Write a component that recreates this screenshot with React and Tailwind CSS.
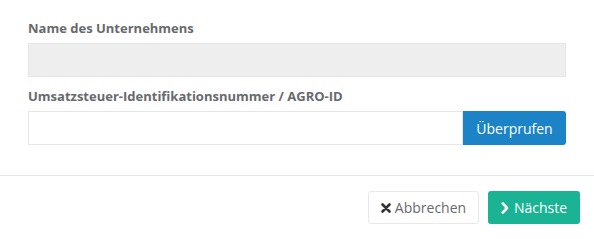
export default function App() {
  return (
    <div className="w-[594px] h-[239px] bg-white font-['Open_Sans',sans-serif] text-[#676a6c]">
      <div className="pt-[19px] pb-[30px] px-[28px]">
        <div className="mb-[10px]">
          <label className="block text-[13px] font-bold leading-[19px] mb-[5px]">Name des Unternehmens</label>
          <div className="h-[34px] bg-[#eeeeee] border border-[#e5e6e7]" />
        </div>
        <div>
          <label className="block text-[13px] font-bold leading-[19px] mb-[5px]">
            Umsatzsteuer-Identifikationsnummer / AGRO-ID
          </label>
          <div className="flex h-[34px]">
            <input className="flex-1 min-w-0 border border-[#e5e6e7] bg-white outline-none px-3 text-[14px]" />
            <button className="w-[103px] bg-[#1c84c6] text-white text-[14px] rounded-r-[3px]">Überprufen</button>
          </div>
        </div>
      </div>
      <div className="border-t border-[#e5e5e5] flex justify-end gap-[9px] pt-[15px] pb-[15px] pr-[14px]">
        <button className="h-[33px] w-[111px] border border-[#e7eaec] rounded-[3px] bg-white text-[14px] text-[#676a6c] flex items-center justify-center gap-[4px]">
          <svg width="10" height="10" viewBox="0 0 10 10">
            <path d="M1.5 1.5 L8.5 8.5 M8.5 1.5 L1.5 8.5" stroke="#333" strokeWidth="2.6" strokeLinecap="round" />
          </svg>
          Abbrechen
        </button>
        <button className="h-[33px] w-[92px] rounded-[3px] bg-[#1ab394] text-[14px] text-white flex items-center justify-center gap-[5px]">
          <svg width="8" height="12" viewBox="0 0 8 12">
            <path d="M1.8 1.5 L6 6 L1.8 10.5" stroke="#fff" strokeWidth="2.6" fill="none" strokeLinecap="round" strokeLinejoin="round" />
          </svg>
          Nächste
        </button>
      </div>
    </div>
  );
}
